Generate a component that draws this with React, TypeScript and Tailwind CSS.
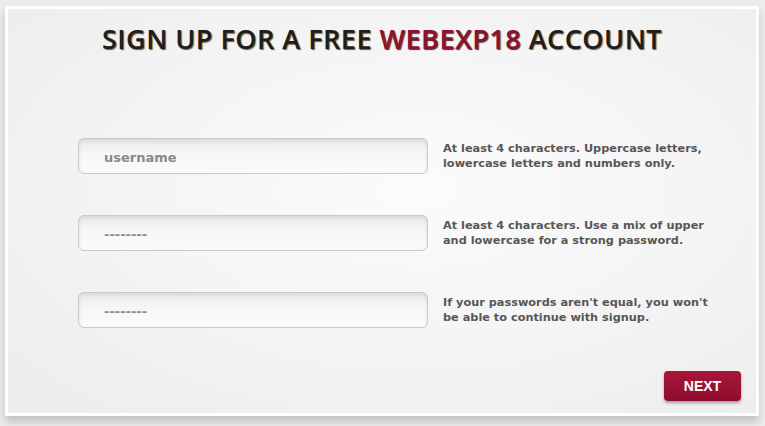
import React from 'react';

const rows = [
  {
    placeholder: 'username',
    hint: ['At least 4 characters. Uppercase letters,', 'lowercase letters and numbers only.'],
  },
  {
    placeholder: '--------',
    hint: ['At least 4 characters. Use a mix of upper', 'and lowercase for a strong password.'],
  },
  {
    placeholder: '--------',
    hint: ["If your passwords aren't equal, you won't", 'be able to continue with signup.'],
  },
];

export default function App() {
  return (
    <div className="w-[765px] h-[426px] bg-[#ececec] pt-[6px] pl-[5px] pr-[6px] overflow-hidden">
      <div className="h-[410px] border-[3px] border-white bg-[#f2f2f2] shadow-[0_6px_8px_rgba(0,0,0,0.18)]">
        <div className="h-full flex flex-col bg-[radial-gradient(ellipse_at_55%_45%,#fbfbfb_0%,#f5f5f5_45%,#ececec_100%)]">
          <h1 className="mt-[13px] text-center text-[27px] leading-[34px] font-semibold tracking-[0.5px] text-[#1e1e1e] [text-shadow:1px_1px_1px_#6b5a3a] [font-family:'Open_Sans',sans-serif]">
            SIGN UP FOR A FREE <span className="text-[#8c1230] [text-shadow:1px_1px_1px_#4a3030]">WEBEXP18</span> ACCOUNT
          </h1>

          <div className="mt-[82px] ml-[70px] flex flex-col gap-[41px]">
            {rows.map((r, i) => (
              <div key={i} className="flex items-center">
                <div className="w-[350px] h-[36px] rounded-[6px] border border-[#c9c9c9] bg-[linear-gradient(#e9e9e9,#f6f6f6_40%,#fbfbfb)] shadow-[inset_0_2px_4px_rgba(0,0,0,0.08)] flex items-center pl-[25px] pt-[3px] text-[13px] font-bold text-[#8a8a8a] [font-family:'DejaVu_Sans',sans-serif]">
                  {r.placeholder}
                </div>
                <div className="ml-[15px] text-[11.3px] leading-[15px] font-bold text-[#575757] [font-family:'DejaVu_Sans',sans-serif]">
                  <div>{r.hint[0]}</div>
                  <div>{r.hint[1]}</div>
                </div>
              </div>
            ))}
          </div>

          <div className="mt-auto mb-[12px] mr-[15px] flex justify-end">
            <button className="w-[77px] h-[30px] rounded-[4px] bg-[linear-gradient(#a8163a,#8e0d2b)] text-white text-[14px] font-bold shadow-[0_2px_3px_rgba(0,0,0,0.35)] [font-family:'Liberation_Sans',sans-serif]">
              NEXT
            </button>
          </div>
        </div>
      </div>
    </div>
  );
}
